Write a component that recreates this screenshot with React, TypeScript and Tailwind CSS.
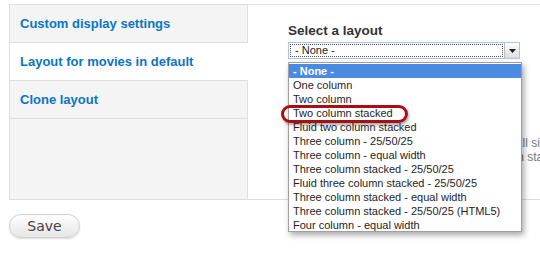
import React from 'react';

const tabs = [
  { label: 'Custom display settings', active: false },
  { label: 'Layout for movies in default', active: true },
  { label: 'Clone layout', active: false },
];

const options = [
  '- None -',
  'One column',
  'Two column',
  'Two column stacked',
  'Fluid two column stacked',
  'Three column - 25/50/25',
  'Three column - equal width',
  'Three column stacked - 25/50/25',
  'Fluid three column stacked - 25/50/25',
  'Three column stacked - equal width',
  'Three column stacked - 25/50/25 (HTML5)',
  'Four column - equal width',
];

export default function App() {
  return (
    <div className="w-[540px] h-[254px] overflow-hidden bg-white font-['Liberation_Sans',sans-serif]">
      <div className="ml-[9px] mt-[4px] h-[196px] flex border-t border-b border-l border-[#dedede]">
        <ul className="w-[238px] shrink-0 flex flex-col">
          {tabs.map((t) => (
            <li
              key={t.label}
              className={
                t.active
                  ? 'h-[38px] flex items-center pl-[10px] bg-white border-b border-[#dedede] text-[13px] font-bold text-[#0a74c4]'
                  : 'h-[38px] flex items-center pl-[10px] bg-[#f4f4f4] border-b border-r border-[#dedede] text-[13px] font-bold text-[#0a74c4]'
              }
            >
              {t.label}
            </li>
          ))}
          <li className="flex-1 bg-[#f4f4f4] border-r border-[#dedede]" />
        </ul>

        <div className="relative flex-1 min-w-0 pl-[40px] pt-[18px]">
          <div className="text-[13.5px] leading-[16px] font-bold text-[#333]">Select a layout</div>
          <div className="mt-[3px] w-[232px] h-[17px] flex border border-[#a9c6ec] bg-white">
            <div className="flex-1 m-[1px] border border-dotted border-[#555] flex items-center pl-[4px] text-[11px] leading-none text-[#222]">
              - None -
            </div>
            <div className="w-[15px] border-l border-[#bbb] bg-gradient-to-b from-white to-[#dcdcdc] flex items-center justify-center">
              <svg width="7" height="4" viewBox="0 0 7 4">
                <path d="M0 0h7L3.5 4z" fill="#222" />
              </svg>
            </div>
          </div>

          <p className="mt-[77px] pl-[3px] whitespace-nowrap text-[12px] leading-[14px] text-[#777]">
            The selected layout will now be applied to all single nodes of this type.
            <br />
            All existing fields will then be placed in each stacked region.
          </p>

          <ul className="absolute left-[40px] top-[57px] w-[234px] h-[170px] pt-[1px] bg-white border border-[#a0a0a0] shadow-[2px_3px_6px_rgba(0,0,0,0.35)] text-[11px]">
            {options.map((o, i) => (
              <li
                key={o}
                className={
                  i === 0
                    ? 'h-[14px] leading-[14px] pl-[4px] bg-[#4a8ae0] text-white font-bold'
                    : 'h-[14px] leading-[14px] pl-[4px] text-[#1e1e28]'
                }
              >
                {o}
              </li>
            ))}
          </ul>

          <div className="absolute left-[33px] top-[100px] w-[127px] h-[18px] rounded-[9px] border-[3px] border-[#a80f14] shadow-[1px_2px_3px_rgba(0,0,0,0.35)]" />
        </div>
      </div>

      <button className="ml-[9px] mt-[14px] w-[71px] h-[24px] rounded-full border border-[#d0d0d0] bg-gradient-to-b from-white to-[#e6e6e6] shadow-[0_1px_2px_rgba(0,0,0,0.15)] text-[14px] text-[#444] font-['DejaVu_Sans',sans-serif]">
        Save
      </button>
    </div>
  );
}
